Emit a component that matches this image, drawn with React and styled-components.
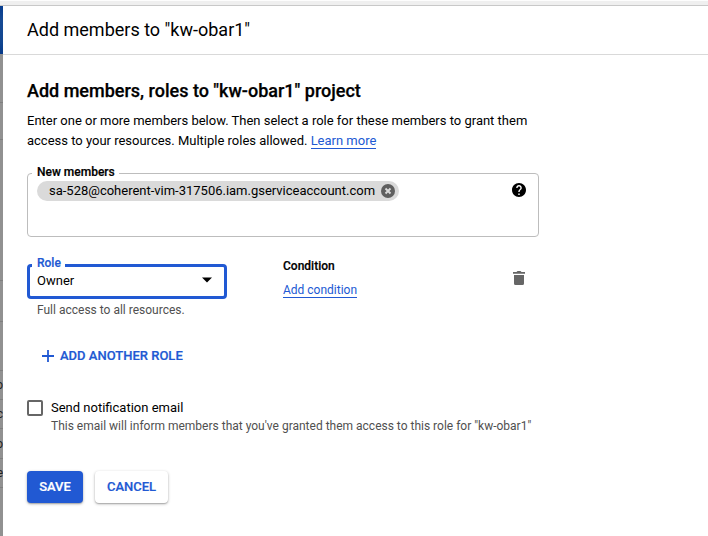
import React from "react";
import styled, { createGlobalStyle } from "styled-components";

const blue = "#2159d3";

const Global = createGlobalStyle`
  *, *::before, *::after { box-sizing: border-box; }
  html, body { margin: 0; padding: 0; background: #fff; }
  body { font-family: Roboto, sans-serif; color: #000; font-size: 13px; overflow: hidden; }
`;

const Page = styled.div`
  display: flex;
  flex-direction: column;
  width: 708px;
  height: 536px;
  overflow: hidden;
`;

const BrowserEdge = styled.div`
  flex: none;
  height: 6px;
  background: #efefef;
  border-top: 1px solid #fdfdfd;
  border-bottom: 1px solid #c8c8c8;
`;

const Main = styled.div`
  flex: 1;
  display: grid;
  grid-template-columns: 3px 1fr;
  min-height: 0;
`;

const Backdrop = styled.div`
  display: flex;
  flex-direction: column;
  background: #919191;
  overflow: hidden;
`;

const BackdropBar = styled.div`
  flex: none;
  height: 48px;
  background: linear-gradient(#073d8f, #164a94 30%, #124690 75%, #063a8a);
  margin-bottom: 1px;
`;

const BackdropRow = styled.div`
  flex: none;
  display: flex;
  align-items: center;
  justify-content: flex-end;
  height: ${(p) => p.$height}px;
  border-bottom: 1px solid #7f7f7f;
  font-size: 12px;
  color: #222;
`;

const Panel = styled.main`
  display: flex;
  flex-direction: column;
  background: #fff;
  min-width: 0;
`;

const Header = styled.header`
  flex: none;
  display: flex;
  align-items: center;
  height: 49px;
  padding-left: 24px;
  border-bottom: 1px solid #d9d9d9;
`;

const Title = styled.h1`
  margin: 0;
  font-size: 18px;
  line-height: 24px;
  font-weight: 400;
`;

const Body = styled.form`
  display: flex;
  flex-direction: column;
  align-items: flex-start;
  width: 536px;
  padding: 24px 0 0 24px;
`;

const Heading = styled.h2`
  margin: 0;
  font-size: 18px;
  line-height: 24px;
  font-weight: 500;
  -webkit-text-stroke: 0.25px currentColor;
  white-space: nowrap;
`;

const Intro = styled.p`
  margin: 8px 0 0;
  font-size: 13px;
  line-height: 20px;
  letter-spacing: -0.005px;
  white-space: nowrap;
`;

const Link = styled.a`
  display: inline-block;
  color: ${blue};
  font-size: ${(p) => (p.$small ? 12 : 13)}px;
  line-height: ${(p) => (p.$small ? 14 : 15)}px;
  border-bottom: 1px solid ${blue};
  text-decoration: none;
`;

const Outline = styled.fieldset`
  display: block;
  margin: 0;
  min-width: 0;
  width: ${(p) => p.$width}px;
  height: ${(p) => p.$height}px;
  padding: 0 12px 0 ${(p) => (p.$active ? 7 : 9)}px;
  border: ${(p) => (p.$active ? `3px solid ${blue}` : "1px solid #bdbdbd")};
  border-radius: 4px;
`;

const Legend = styled.legend`
  height: 14px;
  margin-left: -5px;
  padding: 0 4px 0 5px;
  font-size: 12px;
  line-height: ${(p) => (p.$active ? 10 : 12)}px;
  font-weight: 500;
  -webkit-text-stroke: 0.2px currentColor;
  color: ${(p) => (p.$active ? blue : "#000")};
`;

const MembersBox = styled.div`
  margin-top: 15px;
`;

const MemberRow = styled.div`
  display: flex;
  justify-content: space-between;
  align-items: flex-start;
`;

const Chip = styled.span`
  display: flex;
  align-items: center;
  justify-content: space-between;
  width: 362px;
  height: 20px;
  margin-top: 1px;
  padding: 0 4px 0 12px;
  border-radius: 10px;
  background: #dadada;
  line-height: 19px;
  letter-spacing: -0.01px;
  white-space: nowrap;
`;

const ChipText = styled.span`
  height: 20px;
`;

const HelpSlot = styled.span`
  margin-top: 3px;
`;

const Icon = styled.svg`
  flex: none;
  display: block;
  width: ${(p) => p.$size}px;
  height: ${(p) => p.$size}px;
  fill: ${(p) => p.$color || "currentColor"};
`;

const RoleRow = styled.div`
  display: grid;
  grid-template-columns: 256px 1fr 20px;
  align-items: start;
  width: 502px;
  margin-top: 20px;
`;

const RoleField = styled.div`
  padding-top: 1px;
`;

const SelectValue = styled.div`
  display: flex;
  align-items: center;
  justify-content: space-between;
  height: 18px;
  margin-top: -1px;
`;

const Hint = styled.div`
  font-size: 12px;
  line-height: 16px;
  color: #505050;
  white-space: nowrap;
  padding-left: ${(p) => p.$indent || 0}px;
  margin-top: ${(p) => p.$top || 0}px;
`;

const Condition = styled.div`
  display: flex;
  flex-direction: column;
  align-items: flex-start;
  gap: 9px;
  padding-top: 1px;
`;

const ConditionLabel = styled.div`
  font-size: 12px;
  line-height: 16px;
  font-weight: 500;
  -webkit-text-stroke: 0.2px currentColor;
`;

const IconButton = styled.button`
  display: flex;
  margin: 11px 0 0;
  padding: 0;
  border: 0;
  background: none;
`;

const TextButton = styled.button`
  display: flex;
  align-items: center;
  gap: 6px;
  height: 20px;
  margin: 28px 0 0 15px;
  padding: 0;
  border: 0;
  background: none;
  color: ${blue};
  font: 500 13px/20px Roboto, sans-serif;
  -webkit-text-stroke: 0.2px currentColor;
`;

const CheckRow = styled.label`
  display: flex;
  gap: 8px;
  margin-top: 32px;
`;

const Checkbox = styled.span`
  flex: none;
  width: 16px;
  height: 16px;
  margin-top: 2px;
  border: 2px solid #666;
  border-radius: 2px;
`;

const CheckText = styled.div`
  font-size: 13px;
  line-height: 20px;
`;

const Actions = styled.div`
  display: flex;
  gap: 12px;
  margin-top: 37px;
`;

const Button = styled.button`
  width: ${(p) => p.$width}px;
  height: 32px;
  padding: 0;
  border: 0;
  border-radius: 4px;
  background: ${(p) => (p.$primary ? blue : "#fff")};
  color: ${(p) => (p.$primary ? "#fff" : blue)};
  font: 500 13px/32px Roboto, sans-serif;
  -webkit-text-stroke: 0.2px currentColor;
  box-shadow: 0 1px 3px rgba(0, 0, 0, 0.3), 0 1px 1px rgba(0, 0, 0, 0.14);
`;

const backdropRows = [
  { height: 48 }, { height: 37 }, { height: 141 }, { height: 41 }, { height: 49 },
  { height: 29, text: "o" }, { height: 29, text: "c" }, { height: 30, text: "o" }, { height: 29, text: "e" },
];

function MembersField() {
  return (
    <MembersBox>
      <Outline $width={512} $height={71}>
        <Legend>New members</Legend>
        <MemberRow>
          <Chip>
            <ChipText>sa-528@coherent-vim-317506.iam.gserviceaccount.com</ChipText>
            <Icon $size={14} $color="#5f5f5f" viewBox="0 0 14 14">
              <circle cx="7" cy="7" r="7" />
              <path d="M4.5 4.5l5 5m0-5l-5 5" stroke="#dadada" strokeWidth="1.9" />
            </Icon>
          </Chip>
          <HelpSlot>
            <Icon $size={14} viewBox="2 2 20 20">
              <path d="M12 2C6.48 2 2 6.48 2 12s4.48 10 10 10 10-4.48 10-10S17.52 2 12 2zm1 17h-2v-2h2v2zm2.07-7.75l-.9.92C13.45 12.9 13 13.5 13 15h-2v-.5c0-1.1.45-2.1 1.17-2.83l1.24-1.26c.37-.36.59-.86.59-1.41 0-1.1-.9-2-2-2s-2 .9-2 2H8c0-2.21 1.79-4 4-4s4 1.79 4 4c0 .88-.36 1.68-.93 2.25z" />
            </Icon>
          </HelpSlot>
        </MemberRow>
      </Outline>
    </MembersBox>
  );
}

export default function App() {
  return (
    <Page>
      <Global />
      <BrowserEdge />
      <Main>
        <Backdrop>
          <BackdropBar />
          {backdropRows.map((row, i) => (
            <BackdropRow key={i} $height={row.height}>{row.text}</BackdropRow>
          ))}
        </Backdrop>
        <Panel>
          <Header>
            <Title>Add members to "kw-obar1"</Title>
          </Header>
          <Body>
            <Heading>Add members, roles to "kw-obar1" project</Heading>
            <Intro>
              Enter one or more members below. Then select a role for these members to grant them
              <br />
              access to your resources. Multiple roles allowed. <Link>Learn more</Link>
            </Intro>
            <MembersField />
            <RoleRow>
              <RoleField>
                <Outline $width={200} $height={41} $active>
                  <Legend $active>Role</Legend>
                  <SelectValue>
                    <span>Owner</span>
                    <Icon $size={10} viewBox="0 0 10 10"><path d="M0 2.5h10L5 7.5z" /></Icon>
                  </SelectValue>
                </Outline>
                <Hint $indent={10} $top={3}>Full access to all resources.</Hint>
              </RoleField>
              <Condition>
                <ConditionLabel>Condition</ConditionLabel>
                <Link $small>Add condition</Link>
              </Condition>
              <IconButton type="button" aria-label="Delete role">
                <Icon $size={20} $color="#666" viewBox="0 0 20 20">
                  <path d="M4 4h3.5l1-1h3l1 1H16v1.7H4zM5 7h10v8.5a1.5 1.5 0 0 1-1.5 1.5h-7A1.5 1.5 0 0 1 5 15.5z" />
                </Icon>
              </IconButton>
            </RoleRow>
            <TextButton type="button">
              <Icon $size={12} viewBox="0 0 12 12"><path d="M5.1 0h1.8v5.1H12v1.8H6.9V12H5.1V6.9H0V5.1h5.1z" /></Icon>
              ADD ANOTHER ROLE
            </TextButton>
            <CheckRow>
              <Checkbox />
              <div>
                <CheckText>Send notification email</CheckText>
                <Hint>This email will inform members that you've granted them access to this role for "kw-obar1"</Hint>
              </div>
            </CheckRow>
            <Actions>
              <Button type="button" $width={56} $primary>SAVE</Button>
              <Button type="button" $width={73}>CANCEL</Button>
            </Actions>
          </Body>
        </Panel>
      </Main>
    </Page>
  );
}
